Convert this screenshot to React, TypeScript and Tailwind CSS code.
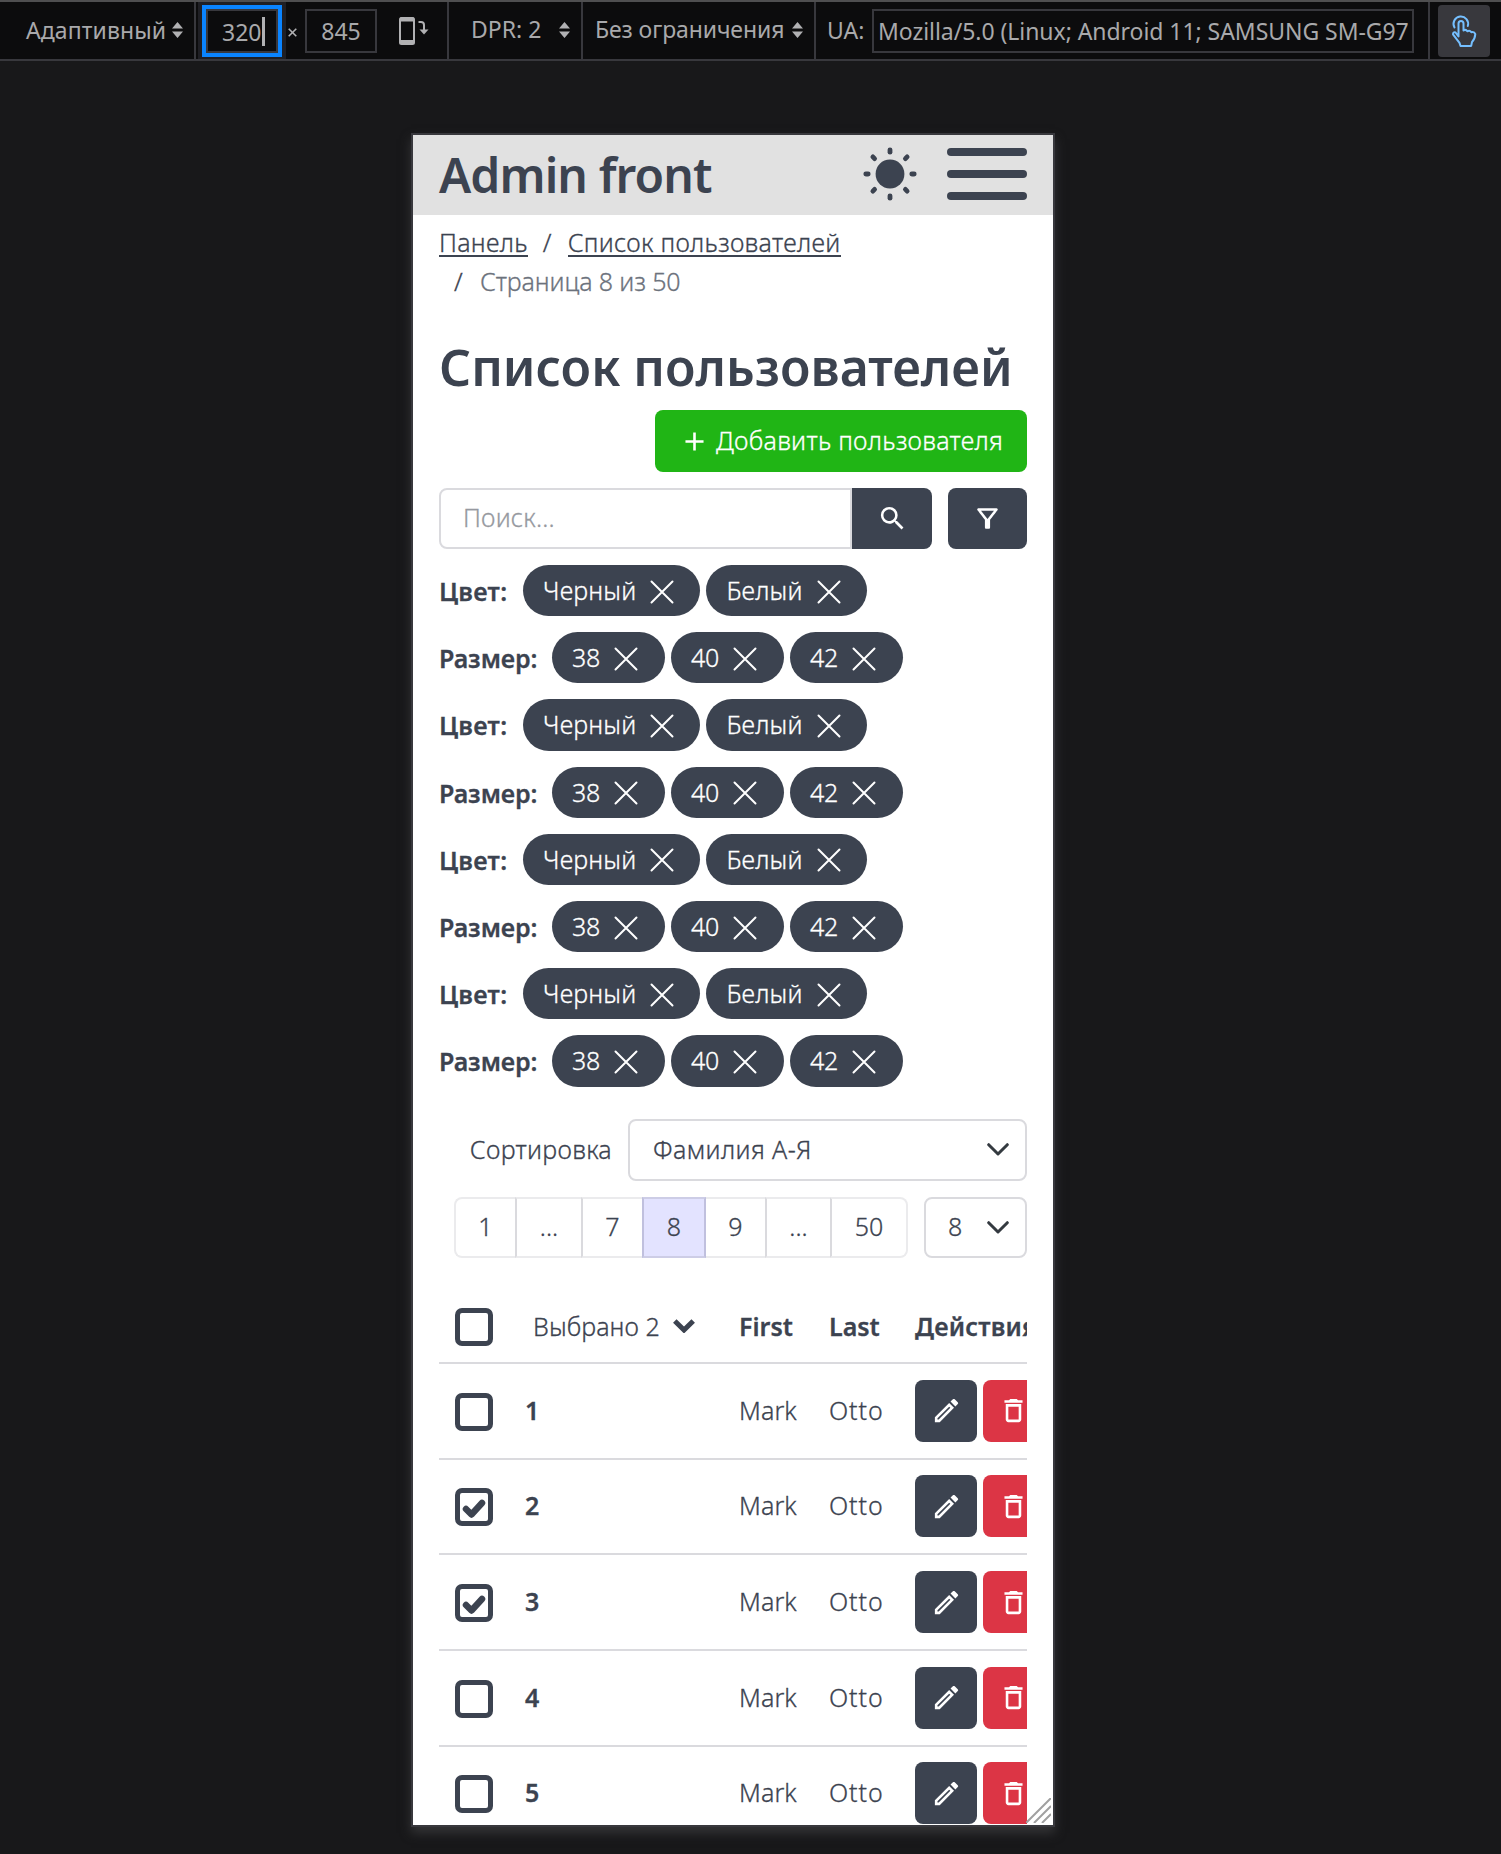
import type { ReactNode } from "react";
import { MdAdd, MdDeleteOutline, MdOutlineEdit, MdOutlineFilterAlt, MdSearch } from "react-icons/md";

function Arrows({ className }: { className: string }) {
  return (
    <svg className={`h-4 w-[11px] shrink-0 ${className}`} viewBox="0 0 11 16" fill="#b1b1b3">
      <path d="M5.5 0 11 6.6H0zM0 9.6h11L5.5 16z" />
    </svg>
  );
}

function Toolbar() {
  return (
    <div className="flex h-[61px] w-full items-stretch overflow-hidden whitespace-pre border-t-2 border-b-2 border-t-[#4f4f50] border-b-[#38383d] bg-[#0c0c0d] text-[23px] leading-[57px] text-[#a9a9ab]">
      <div className="flex w-[196px] items-center border-r-2 border-[#38383d] pl-[26px]">
        <span className="w-[146px] tracking-[0.1px]">Адаптивный</span>
        <Arrows className="mb-px" />
      </div>
      <div className="ml-0.5 flex w-[88px] items-start justify-center bg-[#1f1f24] pt-[3px]">
        <div className="h-[52px] w-20 border-4 border-[#0a84ff] bg-[#0c0c0d]">
          <div className="flex h-11 w-[72px] items-center border-2 border-[#38383d] pl-[14px]">
            <span className="pt-px leading-10">320</span>
            <span className="ml-px h-[29px] w-[3px] bg-[#b1b1b3]" />
          </div>
        </div>
      </div>
      <svg className="mt-[26px] ml-0.5 h-[9px] w-[9px]" viewBox="0 0 9 9" fill="none" stroke="#b1b1b3" strokeWidth="1.6">
        <path d="m.7.7 7.6 7.6M8.3.7.7 8.3" />
      </svg>
      <div className="mt-[7px] ml-2 h-11 w-[72px] border-2 border-[#38383d] text-center leading-[41px]">845</div>
      <svg className="mt-[15px] ml-[22px] h-7 w-[30px]" viewBox="0 0 30 28" fill="none" stroke="#b1b1b3">
        <rect x="1" y="1" width="14" height="26" rx="1.5" strokeWidth="2" />
        <path d="M1 2.500h14M1 25h14" strokeWidth="4" />
        <path d="M19.500 5h2.500q3 0 3 3v5" strokeWidth="2" />
        <path d="M20.500 12.500h9L25 17.500z" fill="#b1b1b3" stroke="none" />
      </svg>
      <div className="ml-[18px] flex w-0.5 bg-[#38383d]" />
      <div className="flex w-[134px] items-center border-r-2 border-[#38383d] pl-[22px]">
        <span className="w-[88px] pb-[3px]">DPR: 2</span>
        <Arrows className="mb-px" />
      </div>
      <div className="flex w-[233px] items-center border-r-2 border-[#38383d] pl-3">
        <span className="w-[197px] pb-[3px] tracking-[-0.1px]">Без ограничения</span>
        <Arrows className="mb-px" />
      </div>
      <span className="ml-[11px] w-[44px]">UA:</span>
      <div className="mt-[7px] ml-px h-11 w-[542px] overflow-hidden border-2 border-[#38383d] pl-1 leading-[41px] tracking-[-0.05px]">
        Mozilla/5.0 (Linux; Android 11; SAMSUNG SM-G97
      </div>
      <div className="ml-[14px] w-0.5 bg-[#38383d]" />
      <div className="mt-[3px] ml-2 flex h-[52px] w-[52px] items-center justify-center rounded-[4px] bg-[#38383d]">
        <svg className="h-8 w-[26px]" viewBox="0 0 26 32" fill="none" stroke="#75bfff" strokeWidth="2" strokeLinejoin="round" strokeLinecap="round">
          <path d="M3.500 12.500A7.300 7.300 0 1 1 16.800 11" />
          <path d="M7.500 21.500V8.500a2.500 2.500 0 0 1 5 0v7q2.200-1.500 4 .8 2.200-1.300 3.800.9 3-.8 4 2-.4 5-3.300 7.800l-.8 3.900H9.500l-1-3L2 19.300q0-2.800 2.600-1.800z" />
        </svg>
      </div>
    </div>
  );
}

function SunIcon() {
  return (
    <svg className="h-[54px] w-[54px]" viewBox="-27 -27 54 54" fill="#3c4350">
      <circle r="14.400" />
      {[0, 45, 90, 135, 180, 225, 270, 315].map((a) => (
        <rect key={a} x="-2.400" y="-26.600" width="4.800" height="7.200" rx="2.400" transform={`rotate(${a})`} />
      ))}
    </svg>
  );
}

function Header() {
  return (
    <header className="flex h-20 items-center bg-[#e1e1e1] px-[26px]">
      <span className="flex-1 pb-px text-[48px] leading-none font-semibold tracking-[-0.9px]">Admin front</span>
      <div className="-mt-[2px]">
        <SunIcon />
      </div>
      <div className="-mt-[2px] ml-[30px] flex w-20 flex-col gap-3.5">
        <span className="h-2 rounded-full bg-[#3c4350]" />
        <span className="h-2 rounded-full bg-[#3c4350]" />
        <span className="h-2 rounded-full bg-[#3c4350]" />
      </div>
    </header>
  );
}

function Crumb({ children }: { children: ReactNode }) {
  return <span className="h-[34px] border-b-2 border-[#3c4350] leading-[39px]">{children}</span>;
}

function Chip({ label, wide }: { label: string; wide?: boolean }) {
  return (
    <span className={`flex h-[51.2px] items-center rounded-full bg-[#3c4350] pl-5 text-white ${wide ? "pr-[26px]" : "pr-[27px]"}`}>
      <span className={wide ? "tracking-[0.2px]" : "tracking-[-0.3px]"}>{label}</span>
      <svg className="mt-0.5 ml-3.5 h-6 w-6" viewBox="0 0 24 24" stroke="white" strokeWidth="2" strokeLinecap="round">
        <path d="m1.500 1.500 21 21m0-21-21 21" />
      </svg>
    </span>
  );
}

function Chevron({ bold }: { bold?: boolean }) {
  return bold ? (
    <svg className="h-3.5 w-[22px]" viewBox="0 0 22 14" fill="none" stroke="#3c4350" strokeWidth="5">
      <path d="m1.800 2 9.200 9 9.200-9" />
    </svg>
  ) : (
    <svg className="h-[13px] w-[22px]" viewBox="0 0 22 13" fill="none" stroke="#343a40" strokeWidth="3" strokeLinecap="round" strokeLinejoin="round">
      <path d="m1.700 1.700 9.300 9.300 9.300-9.300" />
    </svg>
  );
}

function Filters() {
  return (
    <div className="mt-4 flex flex-col gap-4">
      {[0, 1, 2, 3, 4, 5, 6, 7].map((i) => (
        <div key={i} className="flex h-[51.2px] items-center gap-1.5">
          <span className={`mr-[9px] pt-0.5 font-semibold ${i % 2 ? "w-[98px] tracking-[-0.1px]" : "w-[69px] tracking-[0.3px]"}`}>
            {i % 2 ? "Размер:" : "Цвет:"}
          </span>
          {(i % 2 ? ["38", "40", "42"] : ["Черный", "Белый"]).map((c) => (
            <Chip key={c} label={c} wide={i % 2 === 0} />
          ))}
        </div>
      ))}
    </div>
  );
}

const pages: [string, string][] = [
  ["1", "w-[61px] rounded-l-[8px] border-l-2 border-l-[#ebebed]"],
  ["...", "w-[66px] border-l-2 border-l-[#dadade]"],
  ["7", "w-[61px] border-l-2 border-l-[#dadade]"],
  ["8", "w-[64px] border-x-2 border-x-[#c0c0de] border-y-[#cdcde6]! bg-[#e3e3ff]"],
  ["9", "w-[59px]"],
  ["...", "w-[65px] border-l-2 border-l-[#dadade]"],
  ["50", "w-[78px] rounded-r-[8px] border-x-2 border-l-[#dadade] border-r-[#ebebed]"],
];

function Pagination() {
  return (
    <div className="mt-4 ml-[15px] flex justify-between">
      <div className="flex">
        {pages.map(([label, cls], i) => (
          <span key={i} className={`flex h-[61px] items-center justify-center border-y-2 border-y-[#ebebed] pb-px ${cls}`}>
            {label}
          </span>
        ))}
      </div>
      <div className="flex h-[61px] w-[103px] items-center justify-between rounded-[8px] border-2 border-[#dadade] pr-4 pl-[22px]">
        <span className="pb-px">8</span>
        <Chevron />
      </div>
    </div>
  );
}

function Checkbox({ checked }: { checked?: boolean }) {
  return (
    <span className="flex h-[38px] w-[38px] items-center justify-center rounded-[7px] border-5 border-[#3c4350]">
      {checked && (
        <svg className="mt-0.5 h-6 w-6" viewBox="0 0 24 24" fill="none" stroke="#3c4350" strokeWidth="6.500" strokeLinecap="round" strokeLinejoin="round">
          <path d="m4 13 5.500 5.500L20 7" />
        </svg>
      )}
    </span>
  );
}

function Table() {
  return (
    <div className="mt-[34px] overflow-hidden">
      <div className="flex h-[72px] w-[700px] items-center border-b-2 border-[#dadade]">
        <div className="w-[94px] pl-4">
          <Checkbox />
        </div>
        <div className="flex w-[206px] items-center">
          <span className="w-[140px] tracking-[0.1px]">Выбрано 2</span>
          <span className="mb-px">
            <Chevron bold />
          </span>
        </div>
        <span className="w-[90px] font-semibold">First</span>
        <span className="w-[86px] font-semibold">Last</span>
        <span className="font-semibold tracking-[0.2px]">Действия</span>
      </div>
      {[1, 2, 3, 4, 5].map((n) => (
        <div key={n} className="flex h-[95.7px] w-[700px] items-center border-b-2 border-[#dadade]">
          <div className="w-[86px] pt-0.5 pl-4">
            <Checkbox checked={n === 2 || n === 3} />
          </div>
          <span className="w-[214px] pb-px font-semibold">{n}</span>
          <span className="w-[90px] pb-px tracking-[0.1px]">Mark</span>
          <span className="w-[86px] pb-px tracking-[0.9px]">Otto</span>
          <span className="flex h-[62px] w-[62px] items-center justify-center rounded-[8px] bg-[#3c4350] text-white">
            <MdOutlineEdit size={31} />
          </span>
          <span className="ml-1.5 flex h-[62px] w-[62px] items-center justify-center rounded-[8px] bg-[#dc3545] pr-0.5 text-white">
            <MdDeleteOutline size={31} />
          </span>
        </div>
      ))}
    </div>
  );
}

export default function App() {
  return (
    <div className="flex h-[1854px] w-[1501px] flex-col overflow-hidden bg-[#18181a] font-['Noto_Sans',sans-serif]">
      <Toolbar />
      <main className="relative mt-[72px] ml-[411px] h-[1694px] w-[644px] shrink-0 overflow-hidden border-2 border-[#38383d] bg-white text-[25px] leading-[39px] font-light whitespace-pre text-[#3c4350] shadow-[0_6px_10px_#343436]">
        <Header />
        <div className="px-[26px] pt-2 [-webkit-text-stroke:0.3px]">
          <nav className="tracking-[0.3px]">
            <div className="flex h-[39px]">
              <Crumb>Панель</Crumb>
              <span className="mr-[13px] ml-[15px] w-3">/</span>
              <Crumb>Список пользователей</Crumb>
            </div>
            <div className="flex h-[39px] pl-[15px]">
              <span className="mr-[14px] w-3">/</span>
              <span className="tracking-[-0.1px] text-[#6c727c]">Страница 8 из 50</span>
            </div>
          </nav>
          <h1 className="mt-[35px] h-[62px] text-[50px] leading-[63px] font-semibold [-webkit-text-stroke:0px]">Список пользователей</h1>
          <div className="mt-3 flex justify-end">
            <button className="flex h-[62px] w-[372px] items-center rounded-[8px] bg-[#20b515] pl-6 text-white">
              <MdAdd size={31} className="mr-1.5" />
              <span className="pb-0.5 tracking-[0.3px]">Добавить пользователя</span>
            </button>
          </div>
          <div className="mt-4 flex h-[61px]">
            <div className="flex-1 rounded-l-[8px] border-2 border-[#dadade] pl-[22px] leading-[55px] tracking-[0.2px] text-[#9699a0]">Поиск...</div>
            <span className="flex w-20 items-center justify-center rounded-r-[8px] bg-[#3c4350] text-white">
              <MdSearch size={31} />
            </span>
            <span className="ml-4 flex w-[79px] items-center justify-center rounded-[8px] bg-[#3c4350] text-white">
              <MdOutlineFilterAlt size={31} />
            </span>
          </div>
          <Filters />
          <div className="mt-[32.4px] flex items-center justify-end">
            <span className="mr-4 pb-px tracking-[0.3px]">Сортировка</span>
            <div className="flex h-[62px] w-[399px] items-center justify-between rounded-[8px] border-2 border-[#dadade] pr-4 pl-[23px]">
              <span className="pb-px tracking-[0.4px]">Фамилия А-Я</span>
              <Chevron />
            </div>
          </div>
          <Pagination />
          <Table />
        </div>
        <svg className="absolute right-0.5 bottom-0.5 h-[25px] w-[25px]" viewBox="0 0 25 25" stroke="#a0a0a0" strokeWidth="2">
          <path d="M0 25 25 0M8 25 25 8M16 25l9-9" />
        </svg>
      </main>
    </div>
  );
}
